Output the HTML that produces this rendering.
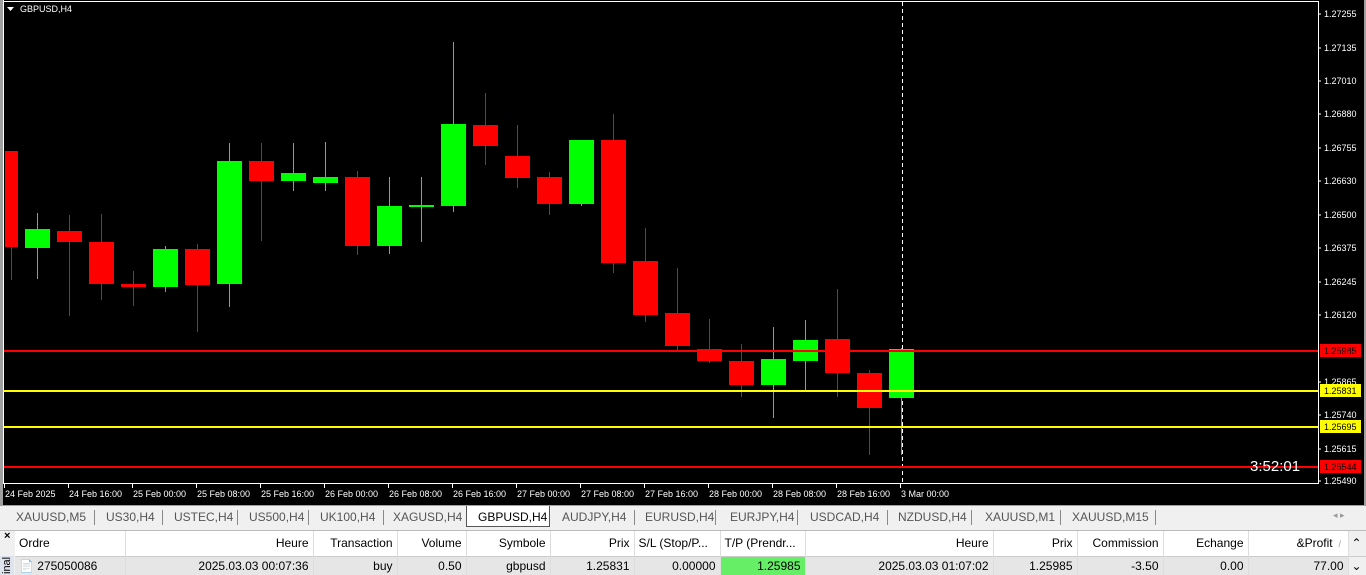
<!DOCTYPE html>
<html><head><meta charset="utf-8"><style>
body{margin:0;width:1366px;height:575px;overflow:hidden;background:#f0f0f0;font-family:"Liberation Sans",sans-serif;position:relative}
.t{position:absolute;font-size:11px;color:#000}
#tabs{position:absolute;left:0;top:505px;width:1366px;height:22px;background:#f0f0f0;border-top:1px solid #a0a0a0}
#tabs span{position:absolute;top:4px;font-size:12px;color:#555}
.sep{position:absolute;top:4px;width:1px;height:15px;background:#888}
table{position:absolute;left:15px;top:531px;border-collapse:collapse;font-size:12px;table-layout:fixed;width:1351px}
td{box-sizing:border-box;height:24px;padding:0 4px;border-right:1px solid #ddd;white-space:nowrap;overflow:hidden}
tr.h td{background:#fff;height:25px}
tr.r td{background:#e6e6e6;height:19px;border-top:1px solid #ccc}
.R{text-align:right}
</style></head><body>
<svg width="1366" height="505" style="position:absolute;left:0;top:0" font-family="Liberation Sans" font-size="9">
<rect x="0" y="0" width="1366" height="505" fill="#000"/>
<rect x="0" y="0" width="3" height="505" fill="#a0a0a0"/>
<rect x="3" y="0" width="1" height="484" fill="#fff"/>
<rect x="3" y="1" width="1316" height="1" fill="#fff"/>
<rect x="1318" y="1" width="1" height="483" fill="#fff"/>
<rect x="3" y="483" width="1316" height="1" fill="#fff"/>
<rect x="1364" y="0" width="2" height="505" fill="#a0a0a0"/>
<path d="M7 7h7l-3.5 4z" fill="#fff"/>
<text x="20" y="12" fill="#fff">GBPUSD,H4</text>
<g stroke-width="1">
<g fill="#f00" stroke="#f00"><line x1="11.5" y1="151" x2="11.5" y2="280"/><rect x="5" y="151" width="13" height="96" stroke="none"/></g>
<g fill="#0f0" stroke="#0f0"><line x1="37.5" y1="213" x2="37.5" y2="279"/><rect x="25" y="229" width="25" height="19" stroke="none"/></g>
<g fill="#f00" stroke="#f00"><line x1="69.5" y1="215" x2="69.5" y2="316"/><rect x="57" y="231" width="25" height="11" stroke="none"/></g>
<g fill="#f00" stroke="#f00"><line x1="101.5" y1="214" x2="101.5" y2="300"/><rect x="89" y="242" width="25" height="42" stroke="none"/></g>
<g fill="#f00" stroke="#f00"><line x1="133.5" y1="271" x2="133.5" y2="306"/><rect x="121" y="284" width="25" height="3" stroke="none"/></g>
<g fill="#0f0" stroke="#0f0"><line x1="165.5" y1="246" x2="165.5" y2="292"/><rect x="153" y="249" width="25" height="38" stroke="none"/></g>
<g fill="#f00" stroke="#f00"><line x1="197.5" y1="244" x2="197.5" y2="332"/><rect x="185" y="249" width="25" height="36" stroke="none"/></g>
<g fill="#0f0" stroke="#0f0"><line x1="229.5" y1="143" x2="229.5" y2="307"/><rect x="217" y="161" width="25" height="123" stroke="none"/></g>
<g fill="#f00" stroke="#f00"><line x1="261.5" y1="143" x2="261.5" y2="241"/><rect x="249" y="161" width="25" height="20" stroke="none"/></g>
<g fill="#0f0" stroke="#0f0"><line x1="293.5" y1="143" x2="293.5" y2="191"/><rect x="281" y="173" width="25" height="8" stroke="none"/></g>
<g fill="#0f0" stroke="#0f0"><line x1="325.5" y1="142" x2="325.5" y2="191"/><rect x="313" y="177" width="25" height="6" stroke="none"/></g>
<g fill="#f00" stroke="#f00"><line x1="357.5" y1="171" x2="357.5" y2="255"/><rect x="345" y="177" width="25" height="69" stroke="none"/></g>
<g fill="#0f0" stroke="#0f0"><line x1="389.5" y1="177" x2="389.5" y2="254"/><rect x="377" y="206" width="25" height="40" stroke="none"/></g>
<g fill="#0f0" stroke="#0f0"><line x1="421.5" y1="177" x2="421.5" y2="242"/><rect x="409" y="205" width="25" height="2" stroke="none"/></g>
<g fill="#0f0" stroke="#0f0"><line x1="453.5" y1="42" x2="453.5" y2="212"/><rect x="441" y="124" width="25" height="82" stroke="none"/></g>
<g fill="#f00" stroke="#f00"><line x1="485.5" y1="93" x2="485.5" y2="165"/><rect x="473" y="125" width="25" height="21" stroke="none"/></g>
<g fill="#f00" stroke="#f00"><line x1="517.5" y1="125" x2="517.5" y2="188"/><rect x="505" y="156" width="25" height="22" stroke="none"/></g>
<g fill="#f00" stroke="#f00"><line x1="549.5" y1="172" x2="549.5" y2="215"/><rect x="537" y="177" width="25" height="27" stroke="none"/></g>
<g fill="#0f0" stroke="#0f0"><line x1="581.5" y1="140" x2="581.5" y2="206"/><rect x="569" y="140" width="25" height="64" stroke="none"/></g>
<g fill="#f00" stroke="#f00"><line x1="613.5" y1="114" x2="613.5" y2="273"/><rect x="601" y="140" width="25" height="123" stroke="none"/></g>
<g fill="#f00" stroke="#f00"><line x1="645.5" y1="228" x2="645.5" y2="322"/><rect x="633" y="261" width="25" height="54" stroke="none"/></g>
<g fill="#f00" stroke="#f00"><line x1="677.5" y1="268" x2="677.5" y2="352"/><rect x="665" y="313" width="25" height="33" stroke="none"/></g>
<g fill="#f00" stroke="#f00"><line x1="709.5" y1="319" x2="709.5" y2="363"/><rect x="697" y="349" width="25" height="12" stroke="none"/></g>
<g fill="#f00" stroke="#f00"><line x1="741.5" y1="344" x2="741.5" y2="397"/><rect x="729" y="361" width="25" height="24" stroke="none"/></g>
<g fill="#0f0" stroke="#0f0"><line x1="773.5" y1="327" x2="773.5" y2="418"/><rect x="761" y="359" width="25" height="26" stroke="none"/></g>
<g fill="#0f0" stroke="#0f0"><line x1="805.5" y1="320" x2="805.5" y2="390"/><rect x="793" y="340" width="25" height="21" stroke="none"/></g>
<g fill="#f00" stroke="#f00"><line x1="837.5" y1="289" x2="837.5" y2="397"/><rect x="825" y="339" width="25" height="34" stroke="none"/></g>
<g fill="#f00" stroke="#f00"><line x1="869.5" y1="370" x2="869.5" y2="455"/><rect x="857" y="373" width="25" height="35" stroke="none"/></g>
</g>
<line x1="902.5" y1="2" x2="902.5" y2="483" stroke="#fff" stroke-dasharray="4,3"/>
<g fill="#0f0" stroke="#0f0"><line x1="901.5" y1="348" x2="901.5" y2="455"/><rect x="889" y="349" width="25" height="49" stroke="none"/></g>
<rect x="4" y="350" width="1314" height="2" fill="#f00"/>
<rect x="4" y="390" width="1314" height="2" fill="#ff0"/>
<rect x="4" y="426" width="1314" height="2" fill="#ff0"/>
<rect x="4" y="466" width="1314" height="2" fill="#f00"/>
<text x="1250" y="471" fill="#fff" font-size="15">3:52:01</text>
<g fill="#fff">
<text x="1324" y="17">1.27255</text><text x="1324" y="51">1.27135</text><text x="1324" y="84">1.27010</text><text x="1324" y="117">1.26880</text><text x="1324" y="151">1.26755</text><text x="1324" y="184">1.26630</text><text x="1324" y="218">1.26500</text><text x="1324" y="251">1.26375</text><text x="1324" y="285">1.26245</text><text x="1324" y="318">1.26120</text><text x="1324" y="385">1.25865</text><text x="1324" y="418">1.25740</text><text x="1324" y="452">1.25615</text><text x="1324" y="484">1.25490</text>
</g>
<g stroke="#fff"><path d="M1318 14h3M1318 48h3M1318 81h3M1318 114h3M1318 148h3M1318 181h3M1318 215h3M1318 248h3M1318 282h3M1318 315h3M1318 382h3M1318 415h3M1318 449h3M1318 481h3"/></g>
<rect x="1320" y="344" width="41" height="13" fill="#f00"/><text x="1324" y="354" fill="#000">1.25985</text>
<rect x="1320" y="384" width="41" height="13" fill="#ff0"/><text x="1324" y="394" fill="#000">1.25831</text>
<rect x="1320" y="420" width="41" height="13" fill="#ff0"/><text x="1324" y="430" fill="#000">1.25695</text>
<rect x="1320" y="460" width="41" height="13" fill="#f00"/><text x="1324" y="470" fill="#000">1.25544</text>
<g fill="#fff">
<text x="5" y="497">24 Feb 2025</text><text x="69" y="497">24 Feb 16:00</text><text x="133" y="497">25 Feb 00:00</text><text x="197" y="497">25 Feb 08:00</text><text x="261" y="497">25 Feb 16:00</text><text x="325" y="497">26 Feb 00:00</text><text x="389" y="497">26 Feb 08:00</text><text x="453" y="497">26 Feb 16:00</text><text x="517" y="497">27 Feb 00:00</text><text x="581" y="497">27 Feb 08:00</text><text x="645" y="497">27 Feb 16:00</text><text x="709" y="497">28 Feb 00:00</text><text x="773" y="497">28 Feb 08:00</text><text x="837" y="497">28 Feb 16:00</text><text x="901" y="497">3 Mar 00:00</text>
</g>
<g stroke="#fff"><path d="M4.5 484v4M68.5 484v4M132.5 484v4M196.5 484v4M260.5 484v4M324.5 484v4M388.5 484v4M452.5 484v4M516.5 484v4M580.5 484v4M644.5 484v4M708.5 484v4M772.5 484v4M836.5 484v4M900.5 484v4"/></g>
</svg>
<div id="tabs">
<span style="left:16px">XAUUSD,M5</span><div class="sep" style="left:94px"></div>
<span style="left:106px">US30,H4</span><div class="sep" style="left:162px"></div>
<span style="left:174px">USTEC,H4</span><div class="sep" style="left:237px"></div>
<span style="left:249px">US500,H4</span><div class="sep" style="left:308px"></div>
<span style="left:320px">UK100,H4</span><div class="sep" style="left:383px"></div>
<span style="left:393px">XAGUSD,H4</span>
<div style="position:absolute;left:466px;top:0;width:82px;height:20px;background:#fff;border:1px solid #555;border-top:none"></div>
<span style="left:478px;color:#000">GBPUSD,H4</span>
<span style="left:562px">AUDJPY,H4</span><div class="sep" style="left:634px"></div>
<span style="left:645px">EURUSD,H4</span><div class="sep" style="left:715px"></div>
<span style="left:730px">EURJPY,H4</span><div class="sep" style="left:797px"></div>
<span style="left:810px">USDCAD,H4</span><div class="sep" style="left:887px"></div>
<span style="left:898px">NZDUSD,H4</span><div class="sep" style="left:971px"></div>
<span style="left:985px">XAUUSD,M1</span><div class="sep" style="left:1060px"></div>
<span style="left:1072px">XAUUSD,M15</span><div class="sep" style="left:1155px"></div>
<span style="left:1333px;font-size:9px;color:#999">◂ ▸</span>
</div>
<div style="position:absolute;left:0;top:527px;width:1366px;height:3px;background:#f0f0f0;border-bottom:1px solid #bbb"></div>
<div style="position:absolute;left:0;top:531px;width:15px;height:44px;background:#f0f0f0"></div>
<div class="t" style="left:4px;top:530px;font-weight:bold;font-size:11px">×</div>
<div style="position:absolute;left:0;top:556px;width:14px;height:19px;background:#dde4ee"></div>
<div class="t" style="font-size:11px;transform:rotate(-90deg);transform-origin:left top;top:574px;left:1px">inal</div>
<table>
<colgroup><col style="width:110px"><col style="width:188px"><col style="width:84px"><col style="width:69px"><col style="width:84px"><col style="width:84px"><col style="width:86px"><col style="width:85px"><col style="width:188px"><col style="width:84px"><col style="width:86px"><col style="width:85px"><col style="width:100px"><col style="width:18px"></colgroup>
<tr class="h"><td>Ordre</td><td class="R">Heure</td><td class="R">Transaction</td><td class="R">Volume</td><td class="R">Symbole</td><td class="R">Prix</td><td>S/L (Stop/P...</td><td>T/P (Prendr...</td><td class="R">Heure</td><td class="R">Prix</td><td class="R">Commission</td><td class="R">Echange</td><td class="R">&amp;Profit <span style="color:#999;font-size:9px">&nbsp;/&nbsp;</span></td><td style="background:#f0f0f0;padding:0 3px">⌃</td></tr>
<tr class="r"><td>&#128196; 275050086</td><td class="R">2025.03.03 00:07:36</td><td class="R">buy</td><td class="R">0.50</td><td class="R">gbpusd</td><td class="R">1.25831</td><td class="R">0.00000</td><td class="R" style="background:#66ee66">1.25985</td><td class="R">2025.03.03 01:07:02</td><td class="R">1.25985</td><td class="R">-3.50</td><td class="R">0.00</td><td class="R">77.00</td><td style="background:#f0f0f0;padding:0 3px">⌄</td></tr>
</table>
</body></html>
